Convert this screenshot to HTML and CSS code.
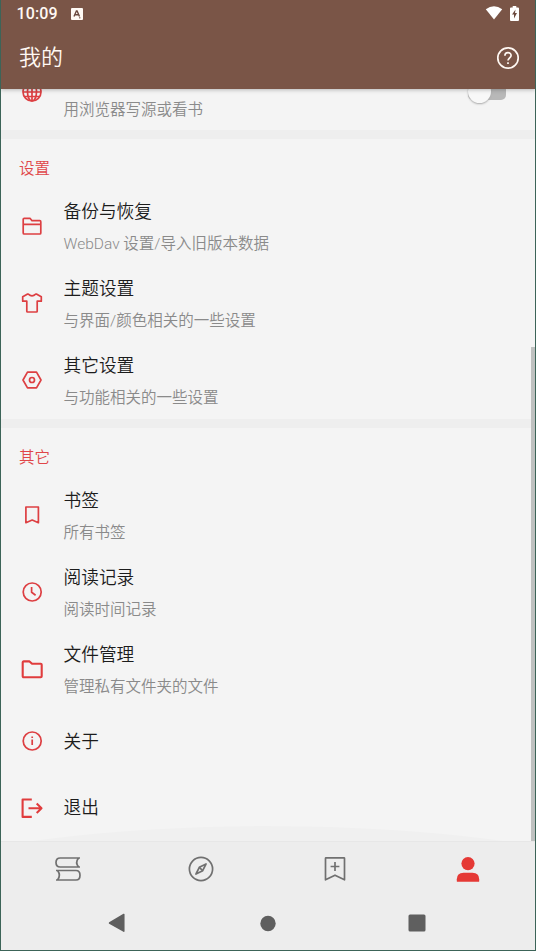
FILE: index.html
```html
<!DOCTYPE html>
<html lang="zh-CN">
<head>
<meta charset="utf-8">
<title>我的</title>
<link rel="stylesheet" href="styles.css">
</head>
<body>
<div class="screen">
  <header class="top">
    <div class="status">
      <span class="time">10:09</span>
      <svg class="keyboard" width="12" height="12" viewBox="0 0 12 12"><rect width="12" height="12" rx="1" fill="#fffaf5"/><path d="M3 8.5 5.4 3h.7l2.4 5.5M4 6.8h3.5M8.3 9.7h1" fill="none" stroke="#6b493e" stroke-width="1.4"/></svg>
      <svg class="wifi" width="18" height="14" viewBox="0 0 18 14"><path d="M.8 3.3Q9-2.6 17.2 3.3L9 13.6Z" fill="#fff"/></svg>
      <svg width="9" height="15" viewBox="0 0 9 15"><path d="M2.7 0h3.6v1.5H8q1 0 1 1V14q0 1-1 1H1q-1 0-1-1V2.500q0-1 1-1h1.700Z" fill="#fff"/><path d="M5.500 3.500 2 8.500h2v4L7 7H5Z" fill="#6b493e"/></svg>
    </div>
    <div class="toolbar">
      <h1>我的</h1>
      <svg width="24" height="24" viewBox="0 0 24 24" fill="none" stroke="#fff8f3" stroke-width="1.700"><circle cx="12" cy="12" r="10.200"/><path d="M8.900 9.700c0-4 6.200-4 6.200-.3 0 2.300-3.100 2.500-3.100 5.200"/><path d="M12 16.200v1.800"/></svg>
    </div>
  </header>

  <main class="list">
    <section class="first">
      <div class="row">
        <svg class="icon" viewBox="0 0 24 24"><circle cx="12" cy="12" r="9"/><ellipse cx="12" cy="12" rx="4.500" ry="9"/><path d="M12 3v18M3 12h18M4.500 7.500h15M4.500 16.500h15"/></svg>
        <div class="text"><div class="title"></div><div class="sub">用浏览器写源或看书</div></div>
        <div class="switch"><i></i></div>
      </div>
    </section>
    <section>
      <h2>设置</h2>
      <div class="row">
        <svg class="icon" viewBox="0 0 24 24"><path d="M3.200 19V5.300q0-1 1-1H10l2 2.400h7.800q1 0 1 1V19q0 1-1 1H4.200q-1 0-1-1ZM3.200 10.300h17.600"/></svg>
        <div class="text"><div class="title">备份与恢复</div><div class="sub">WebDav 设置/导入旧版本数据</div></div>
      </div>
      <div class="row">
        <svg class="icon" viewBox="0 0 24 24"><path d="M8.300 3.200q3.700 3.200 7.400 0h1.100l4.500 2.600v4.400h-4.100v10q0 .8-.8.800H7.600q-.8 0-.8-.800v-10H2.700V5.800l4.500-2.600Z"/></svg>
        <div class="text"><div class="title">主题设置</div><div class="sub">与界面/颜色相关的一些设置</div></div>
      </div>
      <div class="row">
        <svg class="icon" viewBox="0 0 24 24"><path d="M7.500 4.200h9l4.500 7.800-4.500 7.800h-9L3 12Z"/><circle cx="12" cy="12" r="2.500"/></svg>
        <div class="text"><div class="title">其它设置</div><div class="sub">与功能相关的一些设置</div></div>
      </div>
    </section>
    <section>
      <h2>其它</h2>
      <div class="row">
        <svg class="icon" viewBox="0 0 24 24"><path d="M5.900 4h12.500v15.700L12.200 17l-6.300 2.700Z"/></svg>
        <div class="text"><div class="title">书签</div><div class="sub">所有书签</div></div>
      </div>
      <div class="row">
        <svg class="icon" viewBox="0 0 24 24"><circle cx="12.200" cy="12" r="9"/><path d="M11.600 7v5.300l4 2.900"/></svg>
        <div class="text"><div class="title">阅读记录</div><div class="sub">阅读时间记录</div></div>
      </div>
      <div class="row">
        <svg class="icon bold" viewBox="0 0 24 24"><path d="M2.700 19.200V5.400q0-1 1-1h5.800l2.600 2.400h8.600q1 0 1 1v11.400q0 1-1 1h-17q-1 0-1-1Z"/></svg>
        <div class="text"><div class="title">文件管理</div><div class="sub">管理私有文件夹的文件</div></div>
      </div>
      <div class="row single">
        <svg class="icon" viewBox="0 0 24 24"><circle cx="12.200" cy="12" r="9"/><path d="M12.200 10.500V16M12.200 7.500v1.600" stroke-width="1.700"/></svg>
        <div class="text"><div class="title">关于</div></div>
      </div>
      <div class="row single">
        <svg class="icon bold" viewBox="0 0 24 24"><path d="M11.800 3.500H2.600v17.400h9.200M8.500 12.200h12.800M16.700 7.500l4.800 4.700-4.800 4.700"/></svg>
        <div class="text"><div class="title">退出</div></div>
      </div>
    </section>
    <div class="glow"></div>
    <div class="thumb"></div>
  </main>

  <nav class="tabs">
    <span><svg width="28" height="28" viewBox="0 0 28 28"><path d="M26 3H6.200Q2 3 2 7.500T6.200 12H26M24.600 3q-3.800 4.500 0 9M2 15.500h20q4 0 4 4.700T22 25H2M3.500 15.500q3.800 4.700 0 9.500"/></svg></span>
    <span><svg width="28" height="28" viewBox="0 0 28 28"><circle cx="14" cy="14" r="11.600"/><path d="m19 9-3.300 6.700L9 19l3.300-6.700Z"/><path d="m12.300 12.300 3.400 3.400"/></svg></span>
    <span><svg width="28" height="28" viewBox="0 0 28 28"><path d="M5 2.800h18q.5 0 .5.500v21.500L14 20.200l-9.500 4.600V3.300q0-.5.500-.5ZM14 7v9M9.600 11.500h8.800"/></svg></span>
    <span><svg class="active" width="28" height="28" viewBox="0 0 28 28"><circle cx="14" cy="8.600" r="6.600"/><path d="M2.800 26.200v-2q0-6.500 6.700-6.500h9q6.700 0 6.700 6.500v2q0 .5-.5.500H3.300q-.5 0-.5-.5Z"/></svg></span>
  </nav>
  <nav class="system">
    <svg width="18" height="20" viewBox="0 0 18 20"><path d="M15.800 1.500v16.700L1.500 10Z" fill="#5f5f5f" stroke="#5f5f5f" stroke-width="1.500" stroke-linejoin="round"/></svg>
    <svg width="18" height="20" viewBox="0 0 18 20"><circle cx="10" cy="10.500" r="7.700" fill="#5f5f5f"/></svg>
    <svg width="18" height="20" viewBox="0 0 18 20"><rect x=".5" y="1.500" width="17" height="17" rx="1.500" fill="#5f5f5f"/></svg>
  </nav>
</div>
</body>
</html>
```
FILE: styles.css
```css
* { box-sizing: border-box; }
body { margin: 0; background: #f4f4f4; font-family: Roboto, "Noto Sans CJK SC", sans-serif; }
.screen {
  width: 536px; height: 951px; overflow: hidden;
  display: flex; flex-direction: column;
  border: 1px solid #3c6458; border-top: 0;
}
.top {
  height: 89px; flex: none; z-index: 1;
  background: #7a5547; color: #fff8f3;
  box-shadow: 0 1px 4px rgba(0, 0, 0, .25);
}
.status { height: 28px; display: flex; align-items: center; padding: 0 16px 2px 15.500px; }
.time { font-size: 16px; font-weight: 500; line-height: 20px; padding-top: 2px; letter-spacing: .1px; }
.keyboard { margin: 2px auto 0 13.500px; }
.wifi { margin-right: 7px; }
.toolbar { height: 60px; display: flex; align-items: center; justify-content: space-between; padding: 0 15px 0 18px; }
h1 { margin: 0; font-size: 22px; font-weight: 350; line-height: 32px; }
.list { position: relative; flex: none; height: 752px; overflow: hidden; background: #f4f4f4; }
section { border-top: 9px solid #eee; }
h2 { margin: 0; height: 48px; padding: 18px 18px 0; font-size: 15.500px; font-weight: 350; line-height: 24px; color: #e04648; }
.row { height: 77.330px; display: flex; align-items: center; padding: 0 29px 0 19px; }
.first { margin-top: -36.300px; border: 0; }
.first .row { padding-top: 2px; }
.single { height: 66.600px; }
.icon { width: 24px; height: 24px; flex: none; fill: none; stroke: #dd3f42; stroke-width: 1.700; stroke-linejoin: round; }
.bold { stroke-width: 2.100; stroke: #e03c3d; }
.text { flex: 1; padding: 4px 0 0 19.500px; }
.first .text { padding-top: 3px; }
.single .text { padding-top: 1px; }
.title { min-height: 32px; font-size: 17.700px; font-weight: 350; line-height: 32px; color: #1c1c1c; }
.sub { font-size: 15.500px; font-weight: 350; line-height: 32px; color: #8a8a8a; }
.switch { width: 38px; height: 16px; border-radius: 5px; background: #b8b8b8; }
.switch i { display: block; width: 23px; height: 23px; margin-top: -4px; border-radius: 50%; background: #f8f8f8; box-shadow: 0 1px 2px #aaa; }
.glow {
  position: absolute; left: -180px; bottom: -185px; width: 894px; height: 200px;
  border-radius: 50%; background: rgba(0, 0, 0, .015);
}
.thumb { position: absolute; right: 0; top: 258px; bottom: 0; width: 4px; background: #bfc1c0; }
.tabs { height: 55px; flex: none; display: flex; background: #ededed; border-top: 1px solid #e7e7e7; }
.tabs span { flex: 1; display: flex; align-items: center; justify-content: center; padding-bottom: 1px; }
.tabs svg { fill: none; stroke: #707070; stroke-width: 1.700; stroke-linejoin: round; }
.tabs .active { fill: #e53935; stroke: none; }
.system { flex: 1; display: flex; align-items: center; justify-content: space-between; padding: 0 109px 0 107px; background: #ededed; }
```
